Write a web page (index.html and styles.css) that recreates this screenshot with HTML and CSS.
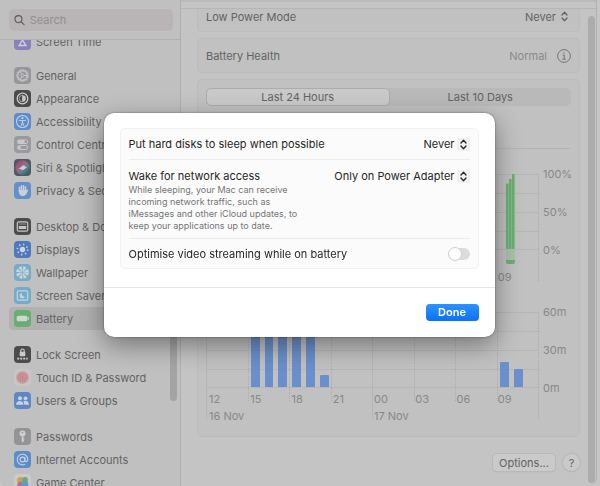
FILE: index.html
```html
<!DOCTYPE html>
<html lang="en">
<head>
    <meta charset="UTF-8">
    <meta name="viewport" content="width=device-width, initial-scale=1.0">
    <title>Battery</title>
    <link rel="stylesheet" href="styles.css">
</head>
<body>
    <div class="window">
        <nav class="sidebar">
            <div class="search">
                <svg viewBox="0 0 12 12" width="12" height="12"><circle cx="5" cy="5" r="3.9"/><path d="M8 8l3.2 3.2"/></svg>
                <input type="search" placeholder="Search" aria-label="Search">
            </div>
            <div class="list">
                <div class="group">
                    <a href="#"><svg class="icon" viewBox="0 0 17 17"><rect width="17" height="17" rx="4" fill="#8683bb"/><path d="M8.5 7l3.4 5.500H5.100z" fill="#8683bb" stroke="#d0cfdc" stroke-width="1.400"/></svg>Screen Time</a>
                </div>
                <div class="group">
                    <a href="#"><svg class="icon" viewBox="0 0 17 17"><rect width="17" height="17" rx="4" fill="#97979b"/><circle cx="8.500" cy="8.500" r="5.400" fill="none" stroke="#c8c8c9" stroke-width="1.600" stroke-dasharray="1.200 .5"/><circle cx="8.500" cy="8.500" r="4.600" fill="none" stroke="#c8c8c9"/><circle cx="8.500" cy="8.500" r="1.500" fill="none" stroke="#c8c8c9"/><path d="M10 8.500h3M7.700 7.200L6.200 4.600M7.700 9.800l-1.500 2.600" stroke="#c8c8c9"/></svg>General</a>
                    <a href="#"><svg class="icon" viewBox="0 0 17 17"><rect width="17" height="17" rx="4" fill="#4b4b4c"/><circle cx="8.500" cy="8.500" r="5.300" fill="none" stroke="#c9c9c9" stroke-width="1.300"/><path d="M8.500 5.200a3.300 3.300 0 0 0 0 6.600z" fill="#4b4b4c" stroke="#c9c9c9" stroke-width=".6"/><path d="M8.500 5.200a3.300 3.300 0 0 1 0 6.600z" fill="#c9c9c9"/></svg>Appearance</a>
                    <a href="#"><svg class="icon" viewBox="0 0 17 17"><rect width="17" height="17" rx="4" fill="#5b8dc9"/><circle cx="8.500" cy="8.500" r="6" fill="none" stroke="#c5d0de" stroke-width="1.100"/><circle cx="8.500" cy="5.200" r="1.100" fill="#c5d0de"/><path d="M5 7.200l3.500.6 3.500-.6M8.500 7.500v2.200l-1.500 3M8.500 9.700l1.500 3" fill="none" stroke="#c5d0de" stroke-width="1.100"/></svg>Accessibility</a>
                    <a href="#"><svg class="icon" viewBox="0 0 17 17"><rect width="17" height="17" rx="4" fill="#9a9a9d"/><rect x="3" y="3.500" width="11" height="4.400" rx="2.200" fill="#c9c9ca"/><circle cx="11.800" cy="5.700" r="1.400" fill="#9a9a9d"/><rect x="3.400" y="9.500" width="10.200" height="4" rx="2" fill="none" stroke="#c9c9ca"/><circle cx="5.500" cy="11.500" r="1.500" fill="#c9c9ca"/></svg>Control Centre</a>
                    <a href="#"><svg class="icon" viewBox="0 0 17 17"><defs><linearGradient id="siri" x2="1" y2="1"><stop offset="0" stop-color="#7b4f79"/><stop offset=".45" stop-color="#a8607c"/><stop offset=".6" stop-color="#4f8f8d"/><stop offset="1" stop-color="#3f4670"/></linearGradient></defs><rect width="17" height="17" rx="4" fill="#555563"/><circle cx="8.500" cy="8.500" r="7.200" fill="url(#siri)"/><path d="M4 9.500c3-.4 4-3.300 5.500-3.300S11 8 13.200 8.700c-2.200.5-3.200 2.300-4.500 2.300S6.500 9.800 4 9.500z" fill="#cfcbd2"/></svg>Siri &amp; Spotlight</a>
                    <a href="#"><svg class="icon" viewBox="0 0 17 17"><rect width="17" height="17" rx="4" fill="#6390cb"/><path d="M5.500 9.500V5.300M7.500 8.500V3.700M9.500 8.500V3.700M11.500 9V5" stroke="#cbd0d8" stroke-width="1.500" stroke-linecap="round"/><path d="M4.800 8h7.500l1.500-.8c.6.600-.8 6.600-4.800 6.800-3 .1-4.200-2-4.200-6z" fill="#cbd0d8"/></svg>Privacy &amp; Security</a>
                </div>
                <div class="group">
                    <a href="#"><svg class="icon" viewBox="0 0 17 17"><rect width="17" height="17" rx="4" fill="#4c4c4d"/><rect x="3.300" y="3.800" width="10.400" height="9.400" rx="1.500" fill="none" stroke="#c6c6c6" stroke-width="1.200"/><path d="M5 6h7" stroke="#8f8f8f"/><rect x="4.800" y="8" width="7.400" height="3" rx=".5" fill="#c6c6c6"/></svg>Desktop &amp; Dock</a>
                    <a href="#"><svg class="icon" viewBox="0 0 17 17"><rect width="17" height="17" rx="4" fill="#5079bd"/><circle cx="8.500" cy="8.500" r="2.700" fill="#cdd3df"/><circle cx="8.500" cy="8.500" r="5.100" fill="none" stroke="#cdd3df" stroke-width="1.700" stroke-dasharray="1.300 2.700"/></svg>Displays</a>
                    <a href="#"><svg class="icon" viewBox="0 0 17 17"><rect width="17" height="17" rx="4" fill="#75abc6"/><circle cx="8.500" cy="8.500" r="4.200" fill="none" stroke="#c8d5db" stroke-width="4.400" stroke-dasharray="2.300 1"/><circle cx="8.500" cy="8.500" r="1.600" fill="none" stroke="#c8d5db"/></svg>Wallpaper</a>
                    <a href="#"><svg class="icon" viewBox="0 0 17 17"><rect width="17" height="17" rx="4" fill="#72acca"/><rect x="3.300" y="3.800" width="10.400" height="9.400" rx="1.300" fill="none" stroke="#c5d4dc" stroke-width="1.200"/><path d="M8 6a2.800 2.800 0 1 0 3 3.800A3 3 0 0 1 8 6z" fill="#c5d4dc"/></svg>Screen Saver</a>
                    <a href="#" class="active"><svg class="icon" viewBox="0 0 17 17"><rect width="17" height="17" rx="4" fill="#68ad72"/><rect x="2.700" y="5.700" width="10.700" height="5.600" rx="1.500" fill="#cbd8cd"/><path d="M14.300 7.500v2" stroke="#cbd8cd" stroke-linecap="round"/></svg>Battery</a>
                </div>
                <div class="group">
                    <a href="#"><svg class="icon" viewBox="0 0 17 17"><rect width="17" height="17" rx="4" fill="#4c4c4d"/><path d="M6.800 6V4.700a1.700 1.700 0 0 1 3.400 0V6" fill="none" stroke="#cbcbcb" stroke-width="1.200"/><rect x="5.700" y="5.700" width="5.600" height="4.600" rx="1" fill="#cbcbcb"/><path d="M3.200 12.700h2M6.200 12.700h2M9.200 12.700h2M12.200 12.700h1.600" stroke="#cbcbcb" stroke-width="1.700"/></svg>Lock Screen</a>
                    <a href="#"><svg class="icon" viewBox="0 0 17 17"><rect width="17" height="17" rx="4" fill="#c8c5c5"/><circle cx="8.500" cy="8.500" r="6.200" fill="#cb9599"/><path d="M4.500 10c0-6.500 8-6.500 8 0M6.500 12c-1-5.800 4.200-6.300 4 0M8.500 8.500v4" fill="none" stroke="#bd7c83" stroke-width=".7"/></svg>Touch ID &amp; Password</a>
                    <a href="#"><svg class="icon" viewBox="0 0 17 17"><rect width="17" height="17" rx="4" fill="#5b89c5"/><circle cx="6" cy="6.300" r="2" fill="#cbd2dc"/><circle cx="11.500" cy="6.300" r="1.900" fill="#cbd2dc"/><path d="M2 12.800c.3-5 7.300-5 7.500 0zM10.300 12.800c0-1.500-.5-2.600-1.200-3.300 2-1.700 5.800-.6 6 3.300z" fill="#cbd2dc"/></svg>Users &amp; Groups</a>
                </div>
                <div class="group">
                    <a href="#"><svg class="icon" viewBox="0 0 17 17"><rect width="17" height="17" rx="4" fill="#949496"/><circle cx="8.500" cy="5.500" r="3" fill="#cecece"/><circle cx="8.500" cy="4.500" r=".8" fill="#949496"/><path d="M8.500 8v6.300M8.500 10.500h1.800M8.500 12.500h1.500" stroke="#cecece" stroke-width="1.500"/></svg>Passwords</a>
                    <a href="#"><svg class="icon" viewBox="0 0 17 17"><rect width="17" height="17" rx="4" fill="#5b8dca"/><circle cx="8.500" cy="8.500" r="2.400" fill="none" stroke="#cbd2dc" stroke-width="1.100"/><path d="M10.900 6v3.400c0 2 2.900 1.700 2.900-.9a5.300 5.300 0 1 0-2.600 4.600" fill="none" stroke="#cbd2dc" stroke-width="1.100"/></svg>Internet Accounts</a>
                    <a href="#"><svg class="icon" viewBox="0 0 17 17"><rect width="17" height="17" rx="4" fill="#cbcbcb"/><circle cx="6.500" cy="6.500" r="3.500" fill="#c6a64f"/><circle cx="11" cy="6" r="3" fill="#71a86c"/><circle cx="6.500" cy="11" r="3.200" fill="#c0668f"/><circle cx="10.700" cy="10.500" r="3.700" fill="#619bc5"/></svg>Game Center</a>
                </div>
            </div>
            <div class="scrollbar"></div>
        </nav>

        <main class="content">
            <div class="toolbar"></div>
            <div class="card row first">
                <label for="lowPower">Low Power Mode</label>
                <span class="picker">
                    <select id="lowPower"><option>Never</option></select>
                    <svg class="stepper" viewBox="0 0 13 13"><path d="M4 5l2.500-2.800L9 5M4 8l2.500 2.800L9 8"/></svg>
                </span>
            </div>
            <div class="card row">
                <span>Battery Health</span>
                <span class="health">Normal
                    <button class="info" aria-label="Battery Health info"><svg viewBox="0 0 14 14" width="14" height="14"><circle cx="7" cy="7" r="6.400"/><path d="M5.700 6h1.500v4M5.300 10.200h3.600M7 3.300v1.300"/></svg></button>
                </span>
            </div>
            <div class="card usage">
                <div class="tabs">
                    <button class="selected">Last 24 Hours</button>
                    <button>Last 10 Days</button>
                </div>
                <div class="chart level">
                    <div class="plot">
                        <div class="ticks"><i></i><i></i><i></i><i></i><i></i><i></i><i></i><i></i></div>
                        <div class="charge"><b style="height: 87%"></b><b style="height: 93%"></b><b style="height: 100%"></b></div>
                    </div>
                    <div class="scale"><span>100%</span><span>50%</span><span>0%</span></div>
                    <div class="hours"><span>12</span><span>15</span><span>18</span><span>21</span><span>00</span><span>03</span><span>06</span><span>09</span></div>
                </div>
                <div class="chart screen">
                    <div class="plot">
                        <div class="ticks"><i></i><i></i><i></i><i></i><i></i><i></i><i></i><i></i></div>
                        <div class="bars">
                            <b style="grid-column: 4; height: 90%"></b>
                            <b style="grid-column: 5; height: 90%"></b>
                            <b style="grid-column: 6; height: 90%"></b>
                            <b style="grid-column: 7; height: 90%"></b>
                            <b style="grid-column: 8; height: 90%"></b>
                            <b style="grid-column: 9; height: 16%"></b>
                            <b style="grid-column: 22; height: 33%"></b>
                            <b style="grid-column: 23; height: 24%"></b>
                        </div>
                    </div>
                    <div class="scale"><span>60m</span><span>30m</span><span>0m</span></div>
                    <div class="hours"><span>12</span><span>15</span><span>18</span><span>21</span><span>00</span><span>03</span><span>06</span><span>09</span></div>
                    <div class="days"><span>16 Nov</span><span>17 Nov</span></div>
                </div>
            </div>
            <div class="footer">
                <button class="options">Options...</button>
                <button class="help" aria-label="Help">?</button>
            </div>
            <div class="scrollbar"></div>
        </main>
    </div>

    <div class="overlay">
        <div class="dialog" role="dialog" aria-label="Options">
            <div class="settings">
                <div class="setting">
                    <label for="disks">Put hard disks to sleep when possible</label>
                    <span class="picker">
                        <select id="disks"><option>Never</option></select>
                        <svg class="stepper" viewBox="0 0 13 13"><path d="M4 5l2.500-2.800L9 5M4 8l2.500 2.800L9 8"/></svg>
                    </span>
                </div>
                <div class="setting wake">
                    <div>
                        <label for="wake">Wake for network access</label>
                        <p>While sleeping, your Mac can receive<br>incoming network traffic, such as<br>iMessages and other iCloud updates, to<br>keep your applications up to date.</p>
                    </div>
                    <span class="picker">
                        <select id="wake"><option>Only on Power Adapter</option></select>
                        <svg class="stepper" viewBox="0 0 13 13"><path d="M4 5l2.500-2.800L9 5M4 8l2.500 2.800L9 8"/></svg>
                    </span>
                </div>
                <div class="setting">
                    <label for="video">Optimise video streaming while on battery</label>
                    <input type="checkbox" id="video" class="switch">
                </div>
            </div>
            <div class="actions"><button class="done">Done</button></div>
        </div>
    </div>
</body>
</html>
```

FILE: styles.css
```css
* { box-sizing: border-box; }
body { margin: 0; background: #c6c6c6; font-family: Inter, "Liberation Sans", sans-serif; font-size: 11px; line-height: 16px; color: #636363; }
button, input, select { font: inherit; color: inherit; margin: 0; padding: 0; border: 0; background: none; }
a { color: inherit; text-decoration: none; }

.window { display: flex; height: 100vh; margin-right: 3px; background: #c4c4c4; border-right: 1px solid #b2b2b2; border-radius: 0 0 8px 8px; overflow: hidden; }

/* sidebar */
.sidebar { position: relative; flex: 0 0 181px; display: flex; flex-direction: column; background: #c1c0c0; border-right: 1px solid #b5adb0; }
.search { display: flex; align-items: center; gap: 5px; margin: 9px 7px 8px 9px; padding: 0 5px; height: 22px; background: #b9b4b5; border-radius: 5px; flex: none; }
.search svg { fill: none; stroke: #5a5a5a; stroke-width: 1.2; stroke-linecap: round; }
.search input { width: 100%; outline: none; }
.search input::placeholder { color: #918e8f; opacity: 1; }
.list { flex: 1; overflow: hidden; padding-left: 9px; border-top: 1px solid #b4aeb0; }
.group { margin-bottom: 13px; }
.group:first-child { margin-top: -10px; margin-bottom: 11px; }
.group a { display: flex; align-items: center; gap: 5px; height: 23px; padding-left: 5px; margin-right: 7px; border-radius: 4px; white-space: nowrap; }
.group a.active { background: #b1b1b1; }
.icon { width: 17px; height: 17px; flex: none; }
.scrollbar { position: absolute; width: 7px; border-radius: 4px; background: #a5a4a4; }
.sidebar .scrollbar { right: 3px; top: 200px; height: 201px; }

/* battery pane */
.content { position: relative; flex: 1; padding: 0 16px; }
.content .scrollbar { right: 1px; top: 16px; bottom: 3px; background: #acacac; }
.toolbar { height: 9px; margin: 0 -16px; border-top: 2px solid #bababa; border-bottom: 1px solid #b6b6b6; }
.card { background: #c1c1c1; border: 1px solid #bcbcbc; border-radius: 5px; margin-bottom: 6px; padding: 0 8px; }
.row { display: flex; align-items: center; justify-content: space-between; height: 35px; }
.first { height: 23px; padding-bottom: 7px; border-radius: 0 0 5px 5px; border-top: 0; }
.health { display: flex; align-items: center; gap: 10px; color: #8a8a8a; }
.info { display: flex; }
.info svg { fill: none; stroke: #747474; }
.picker { display: flex; align-items: center; gap: 2px; }
.picker select { appearance: none; text-align-last: right; outline: none; }
.stepper { width: 13px; height: 13px; border-radius: 3px; fill: none; stroke: currentColor; stroke-width: 1.3; stroke-linecap: round; stroke-linejoin: round; }

.usage { padding: 8px 8px 12px; }
.tabs { display: flex; background: #b9b9b9; border-radius: 5px; height: 18px; }
.tabs button { flex: 1; border-radius: 5px; line-height: 18px; }
.tabs .selected { background: #c9c9c9; border: 1px solid #acacac; line-height: 16px; }

/* charts */
.chart { display: grid; grid-template-columns: 1fr 32px; color: #888; }
.level { border-top: 1px solid #b5b5b5; margin-top: 42px; padding-top: 25px; height: 164px; align-content: start; }
.plot { position: relative; height: 76px; background: repeating-linear-gradient(#b6b6b6 0 1px, transparent 1px 19px); border-bottom: 1px solid #b6b6b6; }
.ticks { position: absolute; inset: 0 0 -32px; display: grid; grid-template-columns: repeat(8, 1fr); border-right: 1px dotted #adadad; }
.ticks i { border-left: 1px dotted #adadad; }
.screen .ticks i { margin-bottom: 18px; }
.screen .ticks i:nth-child(4n + 1) { margin-bottom: 0; border-left: 1px solid #b5b5b5; }
.bars { position: relative; height: 100%; display: grid; grid-template-columns: repeat(24, 1fr); align-items: end; }
.bars b { margin: 0 2px 0 3px; background: #6a8fcc; border-radius: 1px 1px 0 0; }
.charge { position: absolute; left: 90%; bottom: 0; height: 75px; width: 9px; display: flex; align-items: flex-end; background: linear-gradient(transparent 12%, #94bd98 12%); }
.charge b { flex: 1; background: #6caf75; border-right: 1px solid #85b98b; }
.charge::after { content: ""; position: absolute; left: 0; top: 100%; width: 9px; height: 11px; border-bottom: 4px solid #6caf75; border-radius: 0 0 2px 2px; background: #a9c1ab; }
.scale { display: flex; flex-direction: column; justify-content: space-between; margin: -8px 0; padding-left: 4px; }
.hours { display: grid; grid-template-columns: repeat(8, 1fr); padding-left: 3px; margin-top: 3px; }
.level .hours { margin-top: 19px; }
.days { grid-column: 1; display: grid; grid-template-columns: 1fr 1fr; padding-left: 3px; margin-top: 1px; }

.footer { display: flex; justify-content: flex-end; align-items: center; gap: 8px; margin-top: 17px; }
.footer button { background: #cacaca; box-shadow: 0 0 0 1px #b8b8b8, 0 1px 1px #a8a8a8; height: 17px; }
.options { width: 62px; border-radius: 4px; }
.help { width: 17px; border-radius: 50%; }

/* options sheet */
.overlay { position: fixed; inset: 0; display: flex; justify-content: center; align-items: flex-start; padding: 113px 2px 0 0; }
.dialog { width: 391px; background: #fff; border-radius: 10px; color: #262626; box-shadow: 0 0 2px rgba(0, 0, 0, 0.5), 0 8px 26px rgba(0, 0, 0, 0.4); }
.settings { margin: 15px 16px 18px; padding: 0 8px; background: #fbfbfb; border: 1px solid #f1f1f1; border-radius: 5px; }
.setting { display: flex; justify-content: space-between; align-items: center; height: 30px; }
.setting + .setting { border-top: 1px solid #ececec; }
.setting.wake { height: auto; align-items: flex-start; padding: 8px 0 6px; }
.wake p { margin: 0; font-size: 9px; line-height: 12px; color: #757575; }
.dialog .stepper { background: #f0f0f0; }
.switch { appearance: none; width: 22px; height: 12px; border-radius: 6px; background: #dcdcdc; display: flex; align-items: center; }
.switch::before { content: ""; width: 12px; height: 12px; border-radius: 50%; background: #fff; border: 1px solid #cfcfcf; }
.actions { display: flex; justify-content: flex-end; border-top: 1px solid #e6e6e6; padding: 16px; }
.done { width: 53px; height: 17px; border-radius: 4px; background: linear-gradient(#2e92fd, #0a72f5); color: #fff; font-weight: 600; line-height: 17px; }
```
